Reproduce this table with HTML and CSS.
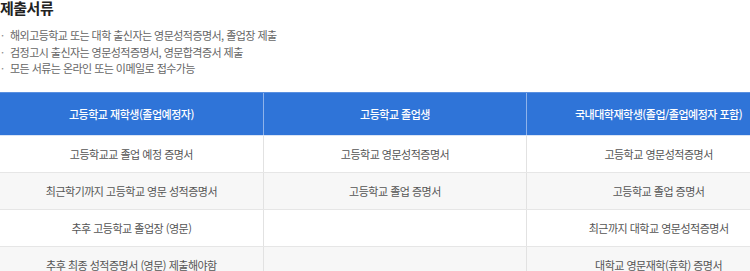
FILE: index.html
```html
<!DOCTYPE html>
<html lang="ko">
<head>
<meta charset="utf-8">
<link rel="stylesheet" href="styles.css">
</head>
<body>
<div class="wrap">
  <h3 class="title">제출서류</h3>
  <ul class="notes">
    <li>해외고등학교 또는 대학 출신자는 영문성적증명서, 졸업장 제출</li>
    <li>검정고시 출신자는 영문성적증명서, 영문합격증서 제출</li>
    <li>모든 서류는 온라인 또는 이메일로 접수가능</li>
  </ul>
  <table class="docs">
    <thead>
      <tr>
        <th>고등학교 재학생(졸업예정자)</th>
        <th>고등학교 졸업생</th>
        <th>국내대학재학생(졸업/졸업예정자 포함)</th>
      </tr>
    </thead>
    <tbody>
      <tr>
        <td>고등학교교 졸업 예정 증명서</td>
        <td>고등학교 영문성적증명서</td>
        <td>고등학교 영문성적증명서</td>
      </tr>
      <tr>
        <td>최근학기까지 고등학교 영문 성적증명서</td>
        <td>고등학교 졸업 증명서</td>
        <td>고등학교 졸업 증명서</td>
      </tr>
      <tr>
        <td>추후 고등학교 졸업장 (영문)</td>
        <td></td>
        <td>최근까지 대학교 영문성적증명서</td>
      </tr>
      <tr>
        <td>추후 최종 성적증명서 (영문) 제출해야함</td>
        <td></td>
        <td>대학교 영문재학(휴학) 증명서</td>
      </tr>
    </tbody>
  </table>
</div>
</body>
</html>
```
FILE: styles.css
```css
html, body {
  margin: 0;
  padding: 0;
  background: #fff;
  overflow: hidden;
}
body {
  font-family: "Noto Sans CJK KR", "Noto Sans", sans-serif;
  color: #333;
}
.wrap {
  width: 790px;
}
.title {
  margin: 0;
  font-size: 15px;
  line-height: 16px;
  font-weight: 700;
  color: #222;
  letter-spacing: -0.5px;
}
.notes {
  list-style: none;
  margin: 11px 0 0 0;
  padding: 0;
}
.notes li {
  position: relative;
  padding-left: 10px;
  font-size: 11px;
  line-height: 16.5px;
  color: #666;
  letter-spacing: -0.55px;
}
.notes li::before {
  content: "·";
  position: absolute;
  left: 1px;
  top: 0;
  color: #888;
}
.docs {
  margin-top: 15px;
  width: 790px;
  table-layout: fixed;
  border-collapse: collapse;
}
.docs th {
  height: 42px;
  padding: 0;
  background: #2f74d8;
  color: #fff;
  font-size: 11px;
  font-weight: 500;
  text-align: center;
  border-top: 1px solid #5a90e0;
  border-bottom: 1px solid #d9e4f5;
  border-left: 1px solid #8fb3ea;
  letter-spacing: -0.5px;
}
.docs th:first-child,
.docs td:first-child {
  border-left: none;
}
.docs td {
  height: 36px;
  padding: 0;
  font-size: 11px;
  color: #555;
  text-align: center;
  border-bottom: 1px solid #e6e6e6;
  border-left: 1px solid #e2e2e2;
  letter-spacing: -0.5px;
}
.docs tbody tr:nth-child(even) td {
  background: #f7f7f7;
}
```
